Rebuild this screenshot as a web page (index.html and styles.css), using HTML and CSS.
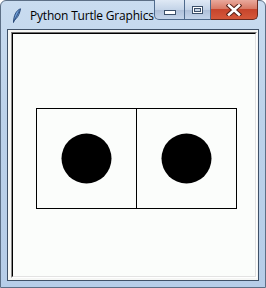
FILE: index.html
```html
<!DOCTYPE html>
<html lang="en">
<head>
    <meta charset="UTF-8">
    <title>Python Turtle Graphics</title>
    <link rel="stylesheet" href="styles.css">
</head>
<body>
    <div class="window">
        <div class="titleBar">
            <svg class="appIcon" width="10" height="16" viewBox="0 0 10 16">
                <path d="M8.5 0.8 C5 2 2.5 6 1.8 11 L1.5 14.5 L2.4 12 C4.5 11 7.5 7 8.5 0.8 Z" fill="#6f9fd8" stroke="#1f3f6f" stroke-width="0.9"/>
                <path d="M7.5 2.5 L2.3 12.5" stroke="#1f3f6f" stroke-width="0.7"/>
            </svg>
            <span class="title">Python Turtle Graphics</span>
            <div class="captionButtons">
                <div class="capBtn minBtn"><span class="minGlyph"></span></div>
                <div class="capBtn maxBtn"><span class="maxGlyph"></span></div>
                <div class="capBtn closeBtn">
                    <svg width="16" height="12" viewBox="0 0 16 12">
                        <path d="M3 1.5 L13 10.5 M13 1.5 L3 10.5" stroke="#5a2218" stroke-width="4.6" stroke-linecap="square"/>
                        <path d="M3 1.5 L13 10.5 M13 1.5 L3 10.5" stroke="#ffffff" stroke-width="2.6" stroke-linecap="square"/>
                    </svg>
                </div>
            </div>
        </div>
        <div class="client">
            <div class="canvasFrame">
                <div class="canvas">
                    <svg width="242" height="242" viewBox="13 34 242 242">
                        <rect x="36.5" y="108.5" width="200" height="100" fill="none" stroke="#000" stroke-width="1"/>
                        <line x1="136.5" y1="108" x2="136.5" y2="209" stroke="#000" stroke-width="1"/>
                        <circle cx="86.5" cy="158.5" r="25" fill="#000"/>
                        <circle cx="186.5" cy="158.5" r="25" fill="#000"/>
                    </svg>
                </div>
            </div>
        </div>
    </div>
</body>
</html>
```

FILE: styles.css
```css
body {
    margin: 0;
    background: #ffffff;
    font-family: 'Open Sans', 'Noto Sans', sans-serif;
}

.window {
    width: 266px;
    height: 288px;
    box-sizing: border-box;
    display: flex;
    flex-direction: column;
    background: linear-gradient(180deg, #c9dcf0 0%, #bcd2ea 40%, #b6cde8 100%);
    border: 1px solid #5c6f86;
    border-radius: 6px 6px 0 0;
}

.titleBar {
    height: 28px;
    display: flex;
    align-items: flex-start;
    flex-shrink: 0;
}

.appIcon {
    margin: 7px 0 0 11px;
}

.title {
    margin: 6px 0 0 8px;
    font-size: 12px;
    color: #000;
    letter-spacing: -0.2px;
    white-space: nowrap;
}

.captionButtons {
    display: flex;
    margin-left: auto;
    margin-right: 7px;
    margin-top: -1px;
}

.capBtn {
    height: 20px;
    box-sizing: border-box;
    border: 1px solid #4e6a8c;
    border-top: none;
    display: flex;
    align-items: center;
    justify-content: center;
    background: linear-gradient(180deg, #dfe9f5 0%, #c4d4e8 50%, #aebfd8 51%, #c3d4ea 100%);
}

.minBtn {
    width: 31px;
    border-radius: 0 0 0 5px;
}

.maxBtn {
    width: 26px;
    border-left: none;
}

.closeBtn {
    width: 47px;
    border-left: none;
    border-color: #6a2a20;
    border-radius: 0 0 5px 0;
    background: linear-gradient(180deg, #e9a99c 0%, #d87a66 45%, #c7452c 50%, #d5583a 100%);
}

.minGlyph {
    width: 10px;
    height: 3px;
    margin-top: 5px;
    background: #fff;
    border: 1px solid #3b4f69;
}

.maxGlyph {
    width: 9px;
    height: 6px;
    border: 1px solid #3b4f69;
    box-shadow: inset 0 0 0 1px #fff, inset 0 0 0 2px #3b4f69;
    background: #c9d6e6;
}

.client {
    margin: 0 6px 6px 6px;
    flex: 1;
    border: 1px solid #3f5168;
    background: #f6f7f5;
    padding: 2px 1px 2px 3px;
}

.canvasFrame {
    width: 244px;
    border: 1px solid;
    border-color: #6e6e6e #ffffff #ffffff #8a8a8a;
}

.canvas {
    width: 242px;
    height: 242px;
    border: 1px solid;
    border-color: #000 #e3e3e3 #e3e3e3 #000;
    background: #fbfdfb;
}

.canvas svg {
    display: block;
}
```
